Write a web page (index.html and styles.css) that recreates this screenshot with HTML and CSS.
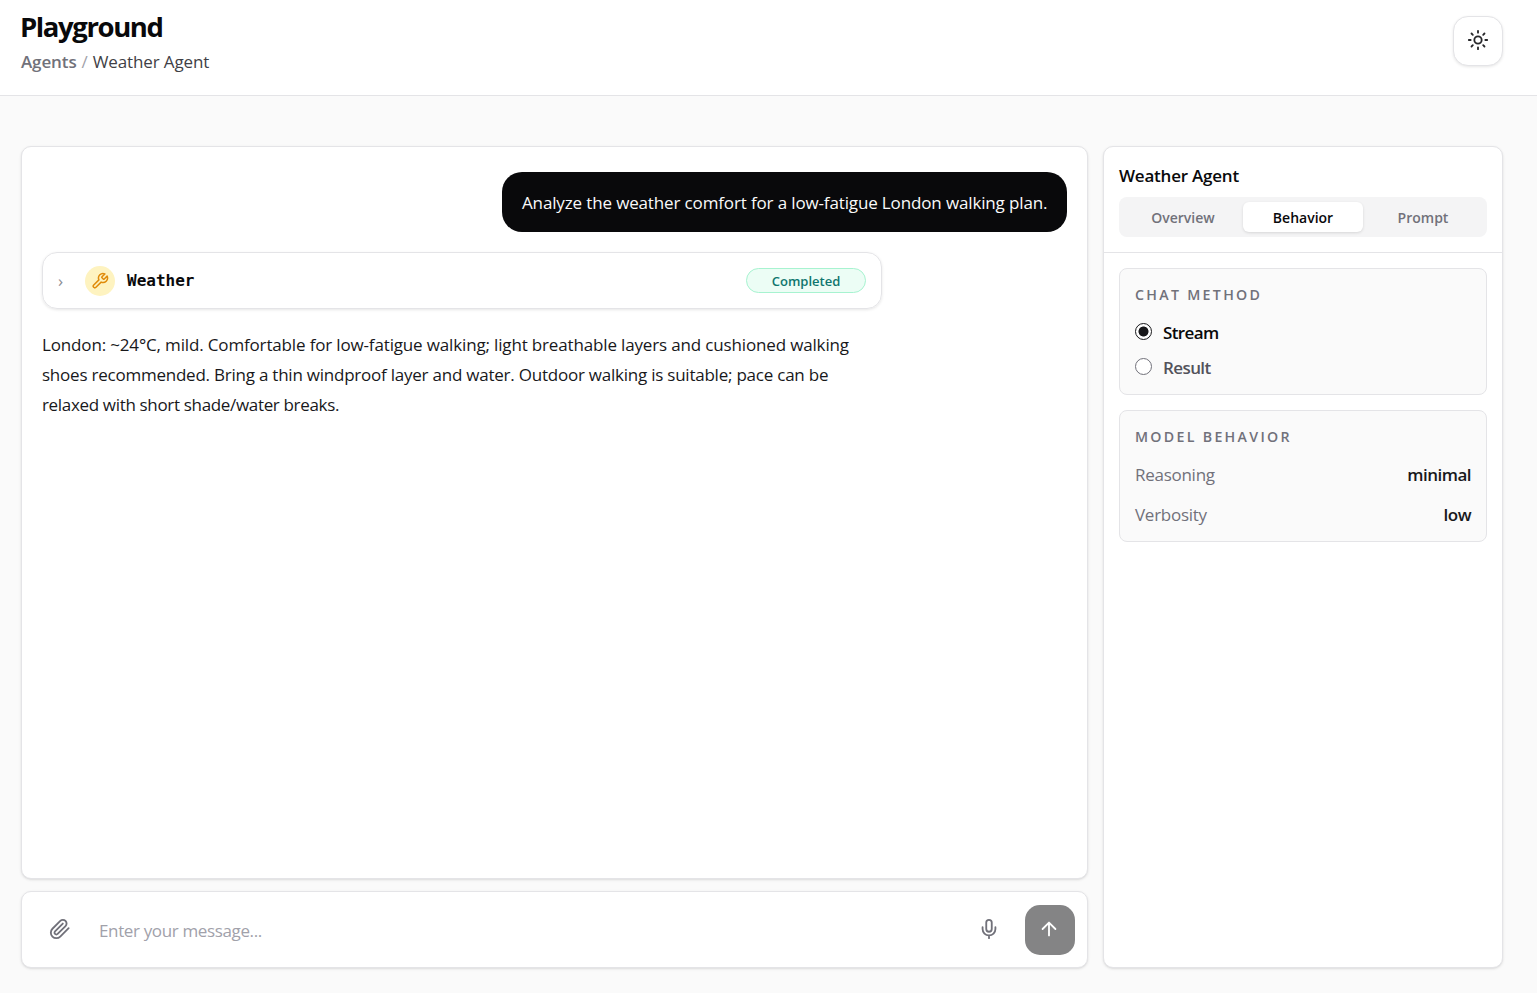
FILE: index.html
```html
<!DOCTYPE html>
<html lang="en">
<head>
	<meta charset="UTF-8">
	<title>Playground</title>
	<link rel="stylesheet" href="styles.css">
</head>
<body>
	<header class="header">
		<div class="heading">
			<h1 class="title">Playground</h1>
			<nav class="crumbs"><a class="crumb-link">Agents</a><span class="crumb-sep">/</span><span class="crumb-now">Weather Agent</span></nav>
		</div>
		<button class="theme-btn" type="button" aria-label="Toggle theme">
			<svg class="icon" viewBox="0 0 24 24"><circle cx="12" cy="12" r="4"/><path d="M12 2v2M12 20v2M4.93 4.93l1.41 1.41M17.66 17.66l1.41 1.41M2 12h2M20 12h2M6.34 17.66l-1.41 1.41M19.07 4.93l-1.41 1.41"/></svg>
		</button>
	</header>
	<main class="main">
		<section class="chat">
			<div class="panel messages">
				<div class="bubble">Analyze the weather comfort for a low-fatigue London walking plan.</div>
				<div class="tool">
					<span class="tool-arrow">›</span>
					<span class="tool-icon">
						<svg class="icon" viewBox="0 0 24 24"><path d="M14.7 6.3a1 1 0 0 0 0 1.4l1.6 1.6a1 1 0 0 0 1.4 0l3.77-3.77a6 6 0 0 1-7.94 7.94l-6.91 6.91a2.12 2.12 0 0 1-3-3l6.91-6.91a6 6 0 0 1 7.94-7.94l-3.76 3.76z"/></svg>
					</span>
					<span class="tool-name">Weather</span>
					<span class="tool-status">Completed</span>
				</div>
				<p class="answer">
					<span class="line l1">London: ~24°C, mild. Comfortable for low-fatigue walking; light breathable layers and cushioned walking</span>
					<span class="line l2">shoes recommended. Bring a thin windproof layer and water. Outdoor walking is suitable; pace can be</span>
					<span class="line l3">relaxed with short shade/water breaks.</span>
				</p>
			</div>
			<form class="panel composer">
				<button class="ghost-btn attach" type="button" aria-label="Attach file">
					<svg class="icon" viewBox="0 0 24 24"><path d="m21.44 11.05-9.19 9.19a6 6 0 0 1-8.49-8.49l8.57-8.57A4 4 0 1 1 18 8.84l-8.59 8.57a2 2 0 0 1-2.83-2.83l8.49-8.48"/></svg>
				</button>
				<input class="message-input" type="text" placeholder="Enter your message...">
				<button class="ghost-btn mic" type="button" aria-label="Voice input">
					<svg class="icon" viewBox="0 0 24 24"><path d="M12 2a3 3 0 0 0-3 3v7a3 3 0 0 0 6 0V5a3 3 0 0 0-3-3Z"/><path d="M19 10v2a7 7 0 0 1-14 0v-2M12 19v3"/></svg>
				</button>
				<button class="send-btn" type="button" aria-label="Send">
					<svg class="icon" viewBox="0 0 24 24"><path d="m5 12 7-7 7 7M12 19V5"/></svg>
				</button>
			</form>
		</section>
		<aside class="panel side">
			<div class="side-head">
				<h2 class="side-title">Weather Agent</h2>
				<div class="tabs">
					<button class="tab" type="button">Overview</button>
					<button class="tab active" type="button">Behavior</button>
					<button class="tab" type="button">Prompt</button>
				</div>
			</div>
			<div class="side-body">
				<div class="card">
					<h3 class="card-title">CHAT METHOD</h3>
					<label class="option checked"><input class="radio" type="radio" name="method" checked><span>Stream</span></label>
					<label class="option"><input class="radio" type="radio" name="method"><span>Result</span></label>
				</div>
				<div class="card">
					<h3 class="card-title">MODEL BEHAVIOR</h3>
					<div class="row"><span>Reasoning</span><b class="value">minimal</b></div>
					<div class="row"><span>Verbosity</span><b class="value">low</b></div>
				</div>
			</div>
		</aside>
	</main>
</body>
</html>
```
FILE: styles.css
```css
* {box-sizing: border-box; margin: 0; padding: 0;}
body {height: 993px; display: flex; flex-direction: column; overflow: hidden; background: #fafafa; color: #18181b; font: 17px/30px "Segoe UI", "Open Sans", "Noto Sans", sans-serif;}
button, input {font: inherit; color: inherit; border: 0; background: none;}
.icon {display: block; width: 22px; height: 22px; fill: none; stroke: currentColor; stroke-width: 2; stroke-linecap: round; stroke-linejoin: round;}
.panel {background: #fff; border: 1px solid #e4e4e7; border-radius: 10px; box-shadow: 0 1px 3px rgba(0,0,0,.1), 0 1px 2px -1px rgba(0,0,0,.1);}

/* header */
.header {flex: none; display: flex; justify-content: space-between; height: 96px; padding: 10px 34px 0 20px; background: #fff; border-bottom: 1px solid #e4e4e7;}
.title {font-size: 27.5px; line-height: 34px; font-weight: 700; letter-spacing: -1.4px; color: #09090b;}
.crumbs {display: flex; gap: 5px; margin: 3px 0 0 1px; line-height: 29px; letter-spacing: -.12px; color: #a1a1aa;}
.crumb-link {font-weight: 600; color: #71717a;}
.crumb-now {color: #3f3f46;}
.theme-btn {display: flex; align-items: center; justify-content: center; width: 50px; height: 50px; margin-top: 6px; padding-bottom: 2px; background: #fff; border: 1px solid #e4e4e7; border-radius: 15px; color: #27272a; box-shadow: 0 1px 3px rgba(0,0,0,.1);}

/* chat */
.main {flex: 1; display: grid; grid-template-columns: 1fr 400px; gap: 15px; padding: 50px 34px 25px 21px;}
.chat {display: flex; flex-direction: column; gap: 12px;}
.messages {flex: 1; padding: 25px 20px;}
.bubble {width: 565px; height: 60px; margin-left: auto; padding: 16px 20px 14px; border-radius: 20px; background: #09090b; color: #fafafa; letter-spacing: -.14px; white-space: nowrap;}
.tool {display: flex; align-items: center; width: 840px; height: 57px; margin-top: 20px; padding: 0 15px; border: 1px solid #e4e4e7; border-radius: 15px; box-shadow: 0 1px 3px rgba(0,0,0,.1);}
.tool-arrow {width: 27px; font-size: 17px; color: #8b8b93;}
.tool-icon {display: flex; align-items: center; justify-content: center; width: 30px; height: 30px; border-radius: 50%; background: #fef3c0; color: #e08c0b;}
.tool-icon .icon {width: 18px; height: 18px;}
.tool-name {margin-left: 12px; font: 700 16px/30px "DejaVu Sans Mono", monospace; color: #09090b;}
.tool-status {width: 120px; height: 25px; margin-left: auto; border: 1px solid #a7f3d0; border-radius: 13px; background: #ecfdf5; color: #0f766e; font-size: 13px; font-weight: 600; line-height: 24px; text-align: center;}
.answer {margin-top: 21px;}
.line {display: block; white-space: nowrap;}
.l1 {letter-spacing: -.155px;}
.l2 {letter-spacing: -.23px;}
.l3 {letter-spacing: -.33px;}

/* composer */
.composer {display: flex; align-items: center; height: 77px; padding: 0 12px;}
.ghost-btn {display: flex; align-items: center; justify-content: center; width: 50px; height: 50px; padding-bottom: 1px; color: #71717a;}
.attach {padding-left: 2px;}
.mic {padding-right: 2px;}
.message-input {flex: 1; padding: 3px 0 0 15px; outline: none; letter-spacing: -.36px;}
.message-input::placeholder {color: #a1a1aa; opacity: 1;}
.send-btn {display: flex; align-items: center; justify-content: center; width: 50px; height: 50px; margin-left: 10px; padding: 0 2px 2px 0; border-radius: 15px; background: #848485; color: #fff;}

/* side panel */
.side-head {height: 106px; padding: 15px; border-bottom: 1px solid #e4e4e7;}
.side-title {font-size: 17px; font-weight: 600; line-height: 27px; letter-spacing: -.22px; color: #09090b;}
.tabs {display: grid; grid-template-columns: repeat(3, 1fr); height: 40px; margin-top: 8px; padding: 5px 4px; border-radius: 8px; background: #f4f4f5;}
.tab {padding-top: 1px; border-radius: 6px; font-size: 14px; font-weight: 600; line-height: 29px; color: #71717a;}
.tab.active {background: #fff; color: #09090b; box-shadow: 0 1px 3px rgba(0,0,0,.12);}
.side-body {display: flex; flex-direction: column; gap: 15px; padding: 15px;}
.card {padding: 15px 15px 11px; border: 1px solid #e4e4e7; border-radius: 8px; background: #fafafa;}
.card-title {margin-bottom: 12px; font-size: 14.2px; font-weight: 600; line-height: 22px; letter-spacing: 2.3px; color: #71717a;}
.option {display: flex; align-items: center; gap: 11px; height: 30px; font-weight: 600; letter-spacing: -.6px; color: #52525b;}
.option + .option {margin-top: 5px;}
.option.checked {color: #09090b;}
.radio {appearance: none; width: 17px; height: 17px; margin-bottom: 4px; border: 1px solid #71717a; border-radius: 50%; background: #fff;}
.radio:checked {border: 1.5px solid #18181b; background: radial-gradient(#18181b 0 4.6px, #fff 5.4px);}
.row {display: flex; justify-content: space-between; letter-spacing: -.27px; color: #71717a;}
.row + .row {margin-top: 10px;}
.value {font-weight: 600; letter-spacing: -.5px; color: #18181b;}
```
